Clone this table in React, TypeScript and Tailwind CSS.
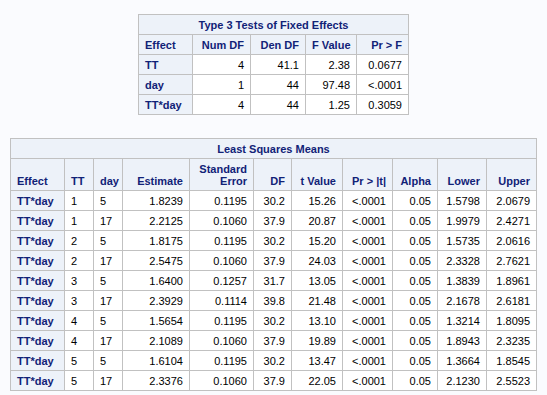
type Align = 'left' | 'right'

interface Column {
  label: string[]
  width: number
  align: Align
}

const fixedCols: Column[] = [
  { label: ['Effect'], width: 54, align: 'left' },
  { label: ['Num DF'], width: 58, align: 'right' },
  { label: ['Den DF'], width: 55, align: 'right' },
  { label: ['F Value'], width: 51, align: 'right' },
  { label: ['Pr > F'], width: 52, align: 'right' },
]

const fixedRows = [
  ['TT', '4', '41.1', '2.38', '0.0677'],
  ['day', '1', '44', '97.48', '<.0001'],
  ['TT*day', '4', '44', '1.25', '0.3059'],
]

const lsCols: Column[] = [
  { label: ['Effect'], width: 54, align: 'left' },
  { label: ['TT'], width: 29, align: 'left' },
  { label: ['day'], width: 29, align: 'left' },
  { label: ['Estimate'], width: 67, align: 'right' },
  { label: ['Standard', 'Error'], width: 64, align: 'right' },
  { label: ['DF'], width: 38, align: 'right' },
  { label: ['t Value'], width: 51, align: 'right' },
  { label: ['Pr > |t|'], width: 50, align: 'right' },
  { label: ['Alpha'], width: 45, align: 'right' },
  { label: ['Lower'], width: 49, align: 'right' },
  { label: ['Upper'], width: 50, align: 'right' },
]

const lsRows = [
  ['TT*day', '1', '5', '1.8239', '0.1195', '30.2', '15.26', '<.0001', '0.05', '1.5798', '2.0679'],
  ['TT*day', '1', '17', '2.2125', '0.1060', '37.9', '20.87', '<.0001', '0.05', '1.9979', '2.4271'],
  ['TT*day', '2', '5', '1.8175', '0.1195', '30.2', '15.20', '<.0001', '0.05', '1.5735', '2.0616'],
  ['TT*day', '2', '17', '2.5475', '0.1060', '37.9', '24.03', '<.0001', '0.05', '2.3328', '2.7621'],
  ['TT*day', '3', '5', '1.6400', '0.1257', '31.7', '13.05', '<.0001', '0.05', '1.3839', '1.8961'],
  ['TT*day', '3', '17', '2.3929', '0.1114', '39.8', '21.48', '<.0001', '0.05', '2.1678', '2.6181'],
  ['TT*day', '4', '5', '1.5654', '0.1195', '30.2', '13.10', '<.0001', '0.05', '1.3214', '1.8095'],
  ['TT*day', '4', '17', '2.1089', '0.1060', '37.9', '19.89', '<.0001', '0.05', '1.8943', '2.3235'],
  ['TT*day', '5', '5', '1.6104', '0.1195', '30.2', '13.47', '<.0001', '0.05', '1.3664', '1.8545'],
  ['TT*day', '5', '17', '2.3376', '0.1060', '37.9', '22.05', '<.0001', '0.05', '2.1230', '2.5523'],
]

const cell = 'border border-[#c1c1c1] px-[6px] pt-[4px] pb-[3px] leading-[12px] whitespace-nowrap'
const head = `${cell} bg-[#edf2f9] text-[#112277] font-bold align-bottom`

function SasTable({ title, cols, rows }: { title: string; cols: Column[]; rows: string[][] }) {
  const total = cols.reduce((s, c) => s + c.width, 0)
  return (
    <table className="table-fixed border-collapse border border-[#c1c1c1]" style={{ width: total }}>
      <colgroup>
        {cols.map((c, i) => (
          <col key={i} style={{ width: c.width }} />
        ))}
      </colgroup>
      <thead>
        <tr>
          <th colSpan={cols.length} className={`${head} text-center`}>{title}</th>
        </tr>
        <tr>
          {cols.map((c, i) => (
            <th key={i} className={`${head} ${c.align === 'right' ? 'text-right' : 'text-left'}`}>
              {c.label.map((l, j) => (
                <div key={j}>{l}</div>
              ))}
            </th>
          ))}
        </tr>
      </thead>
      <tbody>
        {rows.map((r, i) => (
          <tr key={i}>
            {r.map((v, j) =>
              j === 0 ? (
                <th key={j} className={`${head} text-left`}>{v}</th>
              ) : (
                <td key={j} className={`${cell} bg-white text-black ${cols[j].align === 'right' ? 'text-right' : 'text-left'}`}>
                  {v}
                </td>
              )
            )}
          </tr>
        ))}
      </tbody>
    </table>
  )
}

export default function App() {
  return (
    <div
      className="min-h-screen bg-[#fafbfe] flex flex-col items-center pt-[14px] gap-[23px] text-[11px]"
      style={{ fontFamily: '"Liberation Sans", Arial, sans-serif' }}
    >
      <SasTable title="Type 3 Tests of Fixed Effects" cols={fixedCols} rows={fixedRows} />
      <SasTable title="Least Squares Means" cols={lsCols} rows={lsRows} />
    </div>
  )
}
